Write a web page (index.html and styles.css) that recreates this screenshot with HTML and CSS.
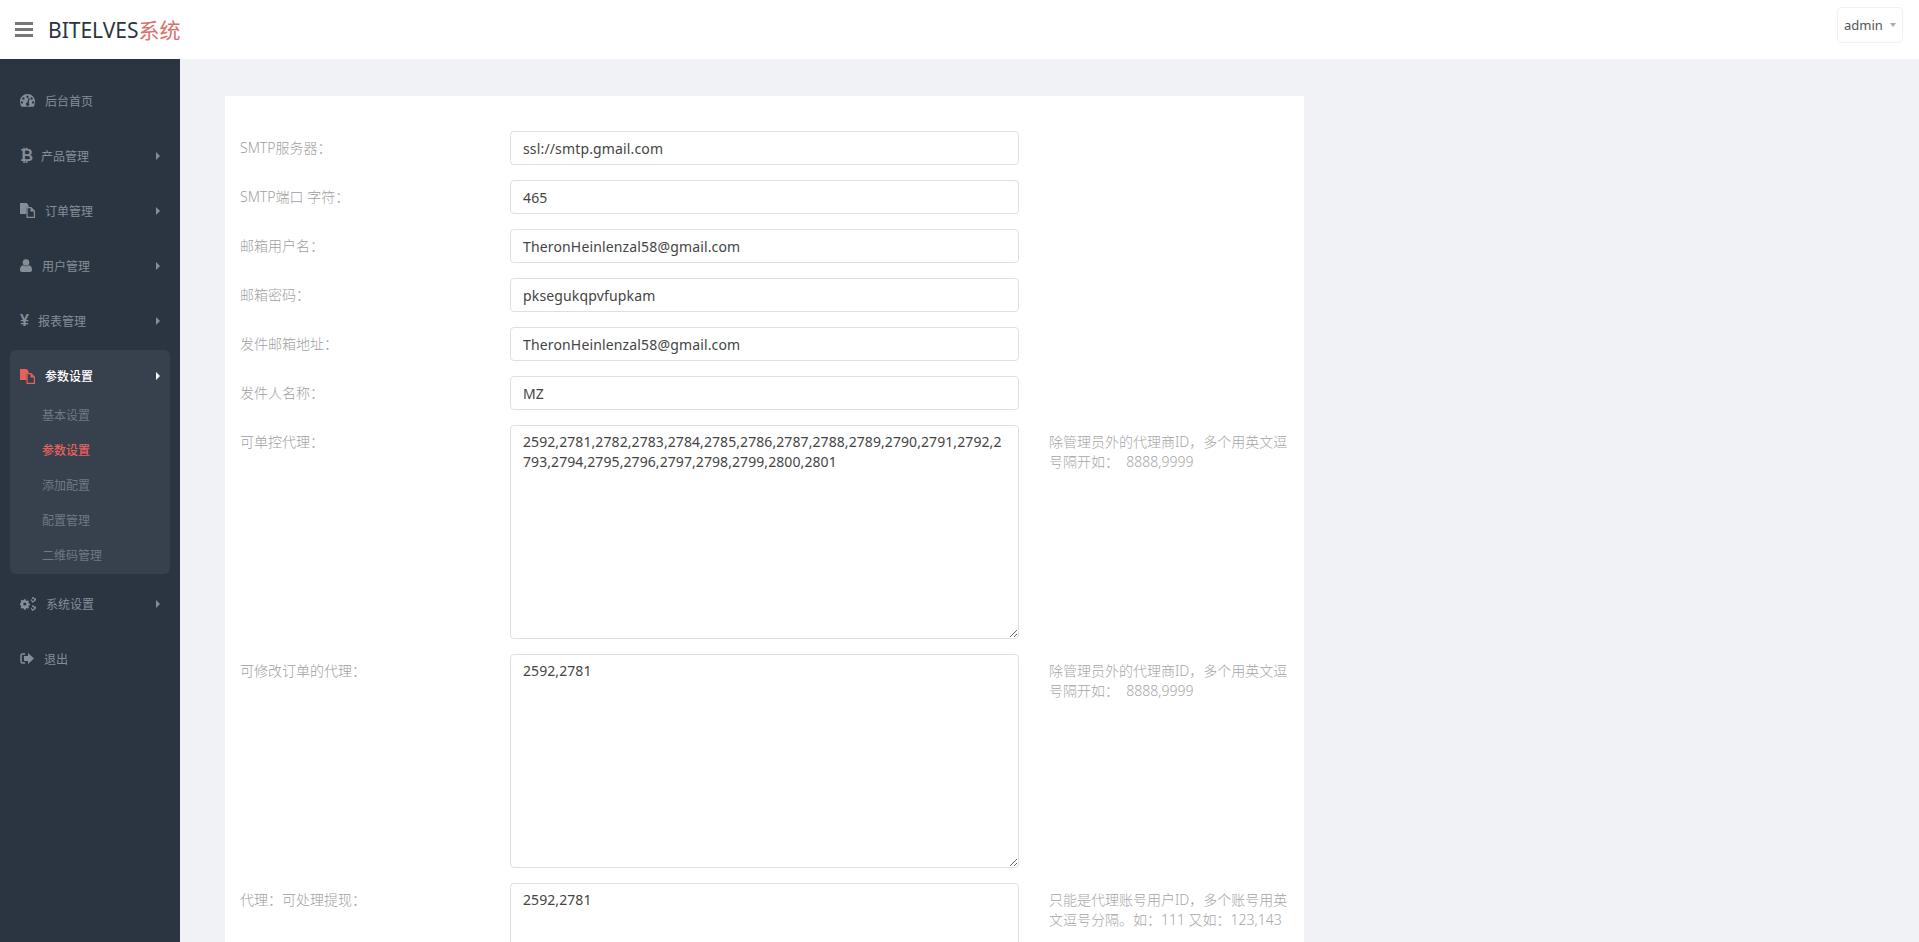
FILE: index.html
```html
<!DOCTYPE html>
<html lang="zh-CN">
<head>
    <meta charset="UTF-8">
    <title>BITELVES系统</title>
    <link rel="stylesheet" href="styles.css">
</head>
<body>
    <header class="topbar">
        <span class="burger"><i></i><i></i><i></i></span>
        <span class="brand">BITELVES<em>系统</em></span>
        <button type="button" class="user-btn">admin<span class="caret"></span></button>
    </header>

    <div class="layout">
        <nav class="sidebar">
            <a class="nav-item">
                <svg class="icon" width="15" height="13" viewBox="0 0 15 13"><path fill-rule="evenodd" d="M7.500 0C3.400 0 0 3.400 0 7.600c0 1.900.5 3.800 1.400 5.200h12.200C14.500 11.400 15 9.500 15 7.600 15 3.400 11.600 0 7.500 0zM7.500 1.600a1.200 1.200 0 1 1 0 2.400 1.200 1.200 0 0 1 0-2.400zM3.400 3.300a1.200 1.200 0 1 1 0 2.400 1.200 1.200 0 0 1 0-2.400zM1.900 7.200a1.200 1.200 0 1 1 0 2.400 1.200 1.200 0 0 1 0-2.400zM13.100 7.200a1.200 1.200 0 1 1 0 2.400 1.200 1.200 0 0 1 0-2.400zM11.600 3.300a1.200 1.200 0 1 1 0 2.400 1.200 1.200 0 0 1 0-2.400zM9.700 4.400L8.700 8.900a1.700 1.700 0 1 1-1.400-.3L8.500 4.100z"/></svg>
                <span>后台首页</span>
            </a>
            <a class="nav-item has-sub">
                <span class="icon glyph btc">₿</span>
                <span>产品管理</span>
            </a>
            <a class="nav-item has-sub">
                <svg class="icon" width="15" height="15" viewBox="0 0 15 15"><use href="#files"/></svg>
                <span>订单管理</span>
            </a>
            <a class="nav-item has-sub">
                <svg class="icon" width="12" height="13" viewBox="0 0 12 13"><circle cx="6" cy="3.500" r="3.300"/><path d="M0 11c0-3 1-4.500 3-4.800C4 7 5 7.300 6 7.300S8 7 9 6.200c2 .3 3 1.800 3 4.800 0 1.300-.8 2-2 2H2c-1.200 0-2-.7-2-2z"/></svg>
                <span>用户管理</span>
            </a>
            <a class="nav-item has-sub">
                <span class="icon glyph yen">¥</span>
                <span>报表管理</span>
            </a>

            <div class="nav-group">
                <a class="nav-item has-sub open">
                    <svg class="icon" width="15" height="15" viewBox="0 0 15 15"><use href="#files"/></svg>
                    <span>参数设置</span>
                </a>
                <a class="sub-item">基本设置</a>
                <a class="sub-item active">参数设置</a>
                <a class="sub-item">添加配置</a>
                <a class="sub-item">配置管理</a>
                <a class="sub-item">二维码管理</a>
            </div>

            <a class="nav-item has-sub">
                <svg class="icon" width="16" height="14" viewBox="0 0 16 14"><path fill-rule="evenodd" d="M4 2.300h1.600l.3 1.300.9.4 1.100-.7 1.100 1.100-.7 1.100.4.900 1.300.3v1.600l-1.300.3-.4.900.7 1.100-1.100 1.100-1.100-.7-.9.4-.3 1.300H4l-.3-1.300-.9-.4-1.100.7-1.100-1.100.7-1.100-.4-.9L0 7.800V6.200l.9-.3.400-.9-.7-1.100 1.100-1.100 1.100.7.900-.4zM4.800 5.400a1.600 1.600 0 1 0 0 3.200 1.600 1.600 0 0 0 0-3.200z"/><path fill-rule="evenodd" d="M12.300 0h1.400l.2 1 .8.400.9-.5.700 1-.6.800.1.900-1 .4-.4.800-1 .1-.6.800-1-.5-.1-1-.8-.5.200-1.100.9-.3.200-.9zM13 1.700a1.100 1.100 0 1 0 0 2.200 1.100 1.100 0 0 0 0-2.200z"/><path fill-rule="evenodd" d="M12.300 8.300h1.400l.2 1 .8.400.9-.5.700 1-.6.800.1.900-1 .4-.4.800-1 .1-.6.800-1-.5-.1-1-.8-.5.200-1.100.9-.3.200-.9zM13 10a1.100 1.100 0 1 0 0 2.200 1.100 1.100 0 0 0 0-2.200z"/></svg>
                <span>系统设置</span>
            </a>
            <a class="nav-item">
                <svg class="icon" width="14" height="11" viewBox="0 0 14 11"><path d="M5 1H2.500C1.600 1 1 1.600 1 2.500v6C1 9.400 1.600 10 2.500 10H5" fill="none" stroke="currentColor" stroke-width="1.500"/><path d="M8 0l6 5.500L8 11V8H4V3h4z"/></svg>
                <span>退出</span>
            </a>
        </nav>

        <main class="content">
            <form class="card">
                <div class="form-row">
                    <label class="form-label">SMTP服务器：</label>
                    <div class="form-field"><input type="text" value="ssl://smtp.gmail.com"></div>
                </div>
                <div class="form-row">
                    <label class="form-label">SMTP端口 字符：</label>
                    <div class="form-field"><input type="text" value="465"></div>
                </div>
                <div class="form-row">
                    <label class="form-label">邮箱用户名：</label>
                    <div class="form-field"><input type="text" value="TheronHeinlenzal58@gmail.com"></div>
                </div>
                <div class="form-row">
                    <label class="form-label">邮箱密码：</label>
                    <div class="form-field"><input type="text" value="pksegukqpvfupkam"></div>
                </div>
                <div class="form-row">
                    <label class="form-label">发件邮箱地址：</label>
                    <div class="form-field"><input type="text" value="TheronHeinlenzal58@gmail.com"></div>
                </div>
                <div class="form-row">
                    <label class="form-label">发件人名称：</label>
                    <div class="form-field"><input type="text" value="MZ"></div>
                </div>
                <div class="form-row">
                    <label class="form-label">可单控代理：</label>
                    <div class="form-field"><textarea>2592,2781,2782,2783,2784,2785,2786,2787,2788,2789,2790,2791,2792,2793,2794,2795,2796,2797,2798,2799,2800,2801</textarea></div>
                    <p class="form-help">除管理员外的代理商ID，多个用英文逗号隔开如：&nbsp; 8888,9999</p>
                </div>
                <div class="form-row">
                    <label class="form-label">可修改订单的代理：</label>
                    <div class="form-field"><textarea>2592,2781</textarea></div>
                    <p class="form-help">除管理员外的代理商ID，多个用英文逗号隔开如：&nbsp; 8888,9999</p>
                </div>
                <div class="form-row">
                    <label class="form-label">代理：可处理提现：</label>
                    <div class="form-field"><textarea>2592,2781</textarea></div>
                    <p class="form-help">只能是代理账号用户ID，多个账号用英文逗号分隔。如：111 又如：123,143</p>
                </div>
            </form>
        </main>
    </div>

    <svg class="defs" width="0" height="0">
        <symbol id="files" viewBox="0 0 15 15">
            <path d="M0 0h6.500l2 2v2H6.500v7H0z"/>
            <path fill="none" stroke="currentColor" stroke-width="1.200" d="M7.100 4.600h3.900l3.400 3.400v6.400H7.100z"/>
            <path d="M10.500 4.500L14.500 8.500h-4z"/>
        </symbol>
    </svg>
</body>
</html>
```

FILE: styles.css
```css
html, body { height: 100%; margin: 0; overflow: hidden; }
body { display: flex; flex-direction: column; background: #f1f2f6; font-family: "Noto Sans", "Noto Sans CJK SC", sans-serif; font-size: 14px; color: #444; }
a { display: block; }
.defs { position: absolute; }

/* top bar */
.topbar { flex: none; height: 59px; display: flex; align-items: center; background: #fff; padding: 0 16px 0 15px; }
.burger { width: 18px; display: flex; flex-direction: column; gap: 3px; margin-right: 15px; }
.burger i { display: block; height: 3px; background: #777; }
.brand { font-size: 21px; color: #2b3542; line-height: 1; padding-top: 2px; }
.brand em { font-style: normal; color: #d9706c; }
.user-btn { align-self: flex-start; margin: 7px 0 0 auto; height: 36px; width: 66px; padding: 0 0 0 6px; display: flex; align-items: center; background: #fff; border: 1px solid #f1f1f1; border-radius: 4px; font: inherit; font-size: 13px; color: #555; }
.caret { margin-left: 7px; border-top: 4px solid #aaa; border-left: 3px solid transparent; border-right: 3px solid transparent; }

/* sidebar */
.layout { flex: 1; display: flex; min-height: 0; }
.sidebar { flex: none; width: 180px; padding-top: 14px; background: #2b3542; font-size: 12px; color: #868d97; }
.nav-item { display: flex; align-items: center; height: 55px; margin: 0 10px; padding: 0 10px; }
.icon { flex: none; margin-right: 10px; fill: currentColor; }
.glyph { font-family: "DejaVu Sans", sans-serif; font-weight: bold; line-height: 1; text-align: left; }
.btc { width: 11px; font-size: 16px; }
.yen { width: 8px; font-size: 16px; font-family: "Liberation Sans", sans-serif; }
.has-sub::after { content: ""; margin-left: auto; border-left: 4px solid #868d97; border-top: 4px solid transparent; border-bottom: 4px solid transparent; }

.nav-group { margin: 2px 10px; padding: 1px 0 1px; background: #37404d; border-radius: 6px; }
.nav-group .nav-item { margin: 0; height: 50px; color: #fff; font-weight: 500; }
.nav-group .icon { color: #e8605c; }
.nav-group .has-sub::after { border-left-color: #fff; }
.sub-item { height: 35px; line-height: 35px; padding-left: 32px; color: #6f7884; }
.sub-item:nth-child(2) { margin-top: -3px; }
.sub-item.active { color: #e8605c; font-weight: 500; }

/* form */
.content { flex: 1; min-width: 0; padding: 37px 45px; }
.card { width: 1079px; padding: 35px 0 0; background: #fff; }
.form-row { display: flex; margin-bottom: 15px; }
.form-label { flex: none; box-sizing: border-box; width: 270px; padding: 7px 15px 0; font-weight: 300; line-height: 20px; color: #a0a0a0; }
.form-field { flex: none; width: 539px; padding: 0 15px; box-sizing: border-box; }
.form-field input, .form-field textarea { display: block; width: 100%; box-sizing: border-box; padding: 6px 12px; border: 1px solid #e0e0e0; border-radius: 4px; background: #fff; font: inherit; letter-spacing: 0.15px; line-height: 20px; color: #444; outline: none; }
.form-field input { height: 34px; }
.form-field textarea { height: 214px; letter-spacing: 0.08px; }
.form-help { flex: none; width: 270px; box-sizing: border-box; margin: 0; padding: 7px 15px 0; font-weight: 300; line-height: 20px; color: #a6a6a6; }
```
